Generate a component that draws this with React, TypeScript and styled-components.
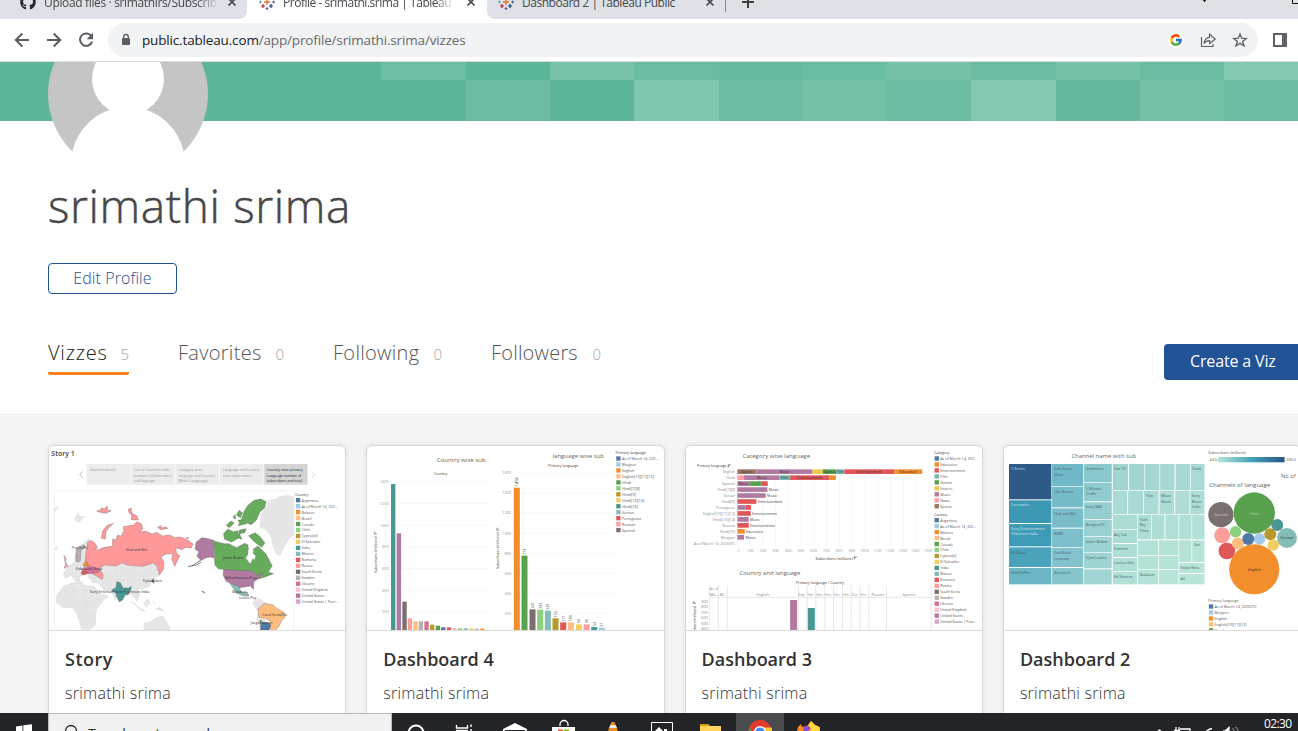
import React from "react";
import styled, { createGlobalStyle, css } from "styled-components";
import { FcGoogle } from "react-icons/fc";
import { FaGithub } from "react-icons/fa";

const GlobalStyle = createGlobalStyle`
  *, *::before, *::after { box-sizing: border-box; }
  body { margin: 0; background: #fff; }
`;

const Screen = styled.div`
  width: 1298px;
  height: 731px;
  overflow: hidden;
  display: flex;
  flex-direction: column;
  background: #fff;
  font-family: "Open Sans", "Noto Sans", sans-serif;
`;

/* ---------- browser chrome ---------- */

const TabStrip = styled.div`
  flex: none;
  display: flex;
  height: 19px;
  overflow: hidden;
  background: #fff;
`;

const Tab = styled.div<{ $width: number; $active?: boolean; $side?: "left" | "right" }>`
  flex: none;
  display: flex;
  align-items: flex-start;
  width: ${(p) => p.$width}px;
  height: 19px;
  background: ${(p) => (p.$active ? "#fff" : "#dee1e6")};
  ${(p) => p.$side === "left" && css`border-bottom-right-radius: 8px;`}
  ${(p) => p.$side === "right" && css`border-bottom-left-radius: 8px;`}
`;

const TabIcon = styled.span<{ $left: number; $gap: number }>`
  flex: none;
  display: block;
  width: 16px;
  height: 16px;
  margin: -6px ${(p) => p.$gap}px 0 ${(p) => p.$left}px;
  svg { display: block; }
`;

const TabTitle = styled.span<{ $width: number; $fade?: boolean; $spacing?: number }>`
  flex: none;
  width: ${(p) => p.$width}px;
  height: 17px;
  margin-top: -6px;
  overflow: hidden;
  white-space: nowrap;
  font-size: 12px;
  line-height: 17px;
  letter-spacing: ${(p) => p.$spacing ?? -0.47}px;
  color: #45494d;
  ${(p) => p.$fade && css`mask-image: linear-gradient(90deg, #000 88%, transparent);`}
`;

const TabClose = styled.svg<{ $left: number }>`
  flex: none;
  display: block;
  margin: -3px 0 0 ${(p) => p.$left}px;
`;

const StripEnd = styled.div`
  flex: 1;
  display: flex;
  align-items: flex-start;
  background: #dee1e6;
`;

const TabDivider = styled.span`
  width: 1px;
  height: 12px;
  background: #85888c;
`;

const PlusIcon = styled.svg`
  display: block;
  margin: -4px 0 0 16px;
`;

const WindowButtons = styled.svg`
  display: block;
  margin-left: auto;
`;

const Toolbar = styled.div`
  flex: none;
  display: flex;
  align-items: flex-start;
  height: 43px;
  padding-top: 4px;
  border-bottom: 1px solid #dadcdd;
  background: #fff;
`;

const NavButtons = styled.div`
  display: flex;
  gap: 16px;
  width: 108px;
  padding: 9px 0 0 14px;
  svg { display: block; flex: none; }
`;

const AddressBar = styled.div`
  display: flex;
  align-items: center;
  width: 1150px;
  height: 34px;
  padding: 0 10px 0 12px;
  border-radius: 17px;
  background: #f1f3f4;
`;

const Url = styled.span`
  margin: 0 0 0 10px;
  font-size: 13.5px;
  letter-spacing: -0.16px;
  line-height: 20px;
  color: #66696d;
  b { font-weight: 400; color: #202124; }
`;

const AddressActions = styled.div`
  display: flex;
  align-items: center;
  gap: 16px;
  margin-left: auto;
  svg { display: block; }
`;

const GoogleBadge = styled.span`
  display: grid;
  place-items: center;
  width: 16px;
  height: 16px;
  border-radius: 50%;
  background: #fff;
`;

const PanelIcon = styled.svg`
  display: block;
  margin: 9px 0 0 14px;
`;

/* ---------- profile ---------- */

const Banner = styled.div`
  flex: none;
  display: flex;
  height: 59px;
  padding-left: 48px;
  background: #5db69b;
`;

const Avatar = styled.svg`
  position: relative;
  z-index: 1;
  display: block;
  flex: none;
  overflow: hidden;
`;

const Tiles = styled.div`
  display: grid;
  flex: none;
  margin-left: 173.4px;
  grid-template-columns: repeat(11, 84.3px);
  grid-template-rows: 18px 41px;
`;

const Tile = styled.span<{ $tone: string }>`
  background: ${(p) => p.$tone};
`;

const Profile = styled.section`
  flex: none;
  display: flex;
  flex-direction: column;
  align-items: flex-start;
  height: 292px;
  padding: 54px 0 0 48px;
  font-weight: 300;
`;

const ProfileName = styled.h1`
  margin: -1px 0 0;
  height: 63px;
  font-size: 46px;
  font-weight: 300;
  line-height: 62px;
  letter-spacing: 0.62px;
  color: #484848;
  -webkit-text-stroke: 0.5px #484848;
`;

const EditButton = styled.button`
  width: 129px;
  height: 31px;
  margin: 26px 0 0;
  padding: 0 0 1px;
  border: 1px solid #1f5296;
  border-radius: 4px;
  background: #fff;
  font: 300 16px/28px "Open Sans", sans-serif;
  letter-spacing: 0.1px;
  color: #1f4f92;
`;

const NavRow = styled.div`
  display: flex;
  align-items: flex-start;
  width: 1250px;
  margin-top: 44px;
`;

const NavTab = styled.div<{ $width: number; $active?: boolean }>`
  flex: none;
  display: flex;
  justify-content: space-between;
  align-items: baseline;
  width: ${(p) => p.$width}px;
  height: 37px;
  margin-right: 49px;
  padding-top: 1px;
  border-bottom: 3px solid ${(p) => (p.$active ? "#f58220" : "transparent")};
  border-radius: 2px;
  font-size: 20px;
  line-height: 28px;
  color: ${(p) => (p.$active ? "#222" : "#555")};
`;

const Label = styled.span<{ $spacing: number }>`
  letter-spacing: ${(p) => p.$spacing}px;
`;

const Count = styled.span`
  font-size: 15px;
  color: #a3a3a3;
`;

const CreateButton = styled.button`
  flex: none;
  width: 160px;
  height: 36px;
  margin: 6px 0 0 auto;
  padding: 0 21px 2px 26px;
  margin-right: -26px;
  border: 0;
  border-radius: 4px;
  background: #225397;
  text-align: left;
  white-space: nowrap;
  font: 400 16px/34px "Open Sans", sans-serif;
  letter-spacing: -0.15px;
  color: #fff;
`;

/* ---------- viz cards ---------- */

const Gallery = styled.section`
  flex: none;
  display: grid;
  grid-template-columns: repeat(4, 298.3px);
  column-gap: 20px;
  height: 300px;
  padding: 32px 0 0 48px;
  background: #f4f4f4;
  overflow: hidden;
`;

const Card = styled.article`
  height: 290px;
  border: 1px solid #d9d9d9;
  border-radius: 6px;
  background: #fff;
  box-shadow: 0 0 5px rgba(0, 0, 0, 0.09);
  overflow: hidden;
`;

const Thumb = styled.svg`
  display: block;
  width: 100%;
  height: 184px;
  font-family: "Open Sans", sans-serif;
`;

const CardBody = styled.div`
  padding: 14px 16px;
  border-top: 1px solid #dcdcdc;
`;

const CardTitle = styled.h2<{ $spacing: number }>`
  margin: 0;
  font-size: 18px;
  font-weight: 600;
  line-height: 28px;
  letter-spacing: ${(p) => p.$spacing}px;
  color: #333;
`;

const CardAuthor = styled.p`
  margin: 8px 0 0;
  font-size: 16px;
  font-weight: 300;
  line-height: 24px;
  letter-spacing: 0.25px;
  color: #333;
`;

/* ---------- taskbar ---------- */

const Taskbar = styled.footer`
  flex: none;
  display: flex;
  height: 18px;
  overflow: hidden;
  background: #232428;
`;

const StartButton = styled.div`
  width: 48px;
`;

const SearchBox = styled.div`
  display: flex;
  align-items: flex-start;
  width: 344px;
  height: 40px;
  padding: 10px 0 0 15px;
  border: 1px solid #b9b9b9;
  background: #f1f1f1;
  font-size: 14px;
  line-height: 20px;
  letter-spacing: -0.1px;
  color: #333;
  span { margin: 0 0 0 10px; }
`;

const TaskIcons = styled.svg`
  display: block;
  flex: none;
`;

const Tray = styled.div`
  display: flex;
  margin-left: auto;
`;

const Clock = styled.span`
  width: 34px;
  padding-top: 2px;
  font-size: 12px;
  line-height: 17px;
  letter-spacing: -0.6px;
  white-space: nowrap;
  color: #fff;
`;

/* ---------- drawing helpers ---------- */

type TextProps = {
  x: number;
  y: number;
  w: number;
  size?: number;
  fill?: string;
  weight?: number;
  turn?: boolean;
  children: string;
};

const T = ({ x, y, w, size = 12, fill = "#555", weight = 400, turn, children }: TextProps) => (
  <text
    x={x}
    y={y}
    fontSize={size}
    fill={fill}
    fontWeight={weight}
    textLength={w}
    lengthAdjust="spacingAndGlyphs"
    transform={turn ? `rotate(-90 ${x} ${y})` : undefined}
  >
    {children}
  </text>
);

type Entry = [string, string, number];

const Legend = ({ x, y, items }: { x: number; y: number; items: Entry[] }) => (
  <g>
    {items.map(([color, label, w], i) => (
      <g key={label}>
        <rect x={x} y={y + i * 17.9} width="13" height="13" fill={color} />
        <T x={x + 17} y={y + 11 + i * 17.9} w={w}>{label}</T>
      </g>
    ))}
  </g>
);

const COUNTRIES: Entry[] = [
  ["#4e79a7", "Argentina", 50], ["#a0cbe8", "As of March 14, 202...", 108], ["#f28e2b", "Belarus", 38],
  ["#ffbe7d", "Brazil", 30], ["#59a14f", "Canada", 37], ["#8cd17d", "Chile", 25], ["#b6992d", "Cyprus[e]", 48],
  ["#f1ce63", "El Salvador", 57], ["#499894", "India", 25], ["#86bcb6", "Mexico", 36], ["#e15759", "Romania", 44],
  ["#ff9d9a", "Russia", 33], ["#79706e", "South Korea", 60], ["#bab0ac", "Sweden", 38], ["#d37295", "Ukraine", 38],
  ["#fabfd2", "United Kingdom", 79], ["#b07aa1", "United States", 68], ["#d4a6c8", "United States | Puer...", 110],
];

const LANGUAGES: Entry[] = [
  ["#4e79a7", "As of March 14, 202...", 110], ["#a0cbe8", "Bhojpuri", 43], ["#f28e2b", "English", 37],
  ["#ffbe7d", "English[10][11][12]", 96], ["#59a14f", "Hindi", 28], ["#8cd17d", "Hindi[7][8]", 54],
  ["#b6992d", "Hindi[9]", 42], ["#f1ce63", "Hindi[13][14]", 67], ["#499894", "Hindi[16]", 48],
  ["#86bcb6", "Korean", 36], ["#e15759", "Portuguese", 58], ["#ff9d9a", "Russian", 40], ["#79706e", "Spanish", 40],
];

const SortMark = ({ x, y, turn }: { x: number; y: number; turn?: boolean }) => (
  <path
    d={turn ? `M${x} ${y}v-9M${x + 3} ${y}v-7M${x + 6} ${y}v-4` : `M${x} ${y}h9M${x} ${y + 3}h6M${x} ${y + 6}h3M${x} ${y}v9`}
    stroke="#555"
    strokeWidth="1.5"
    fill="none"
  />
);

/* ---------- thumbnails ---------- */

const StoryThumb = () => (
  <Thumb viewBox="9 18 888 552" preserveAspectRatio="none">
    <T x={16} y={48} w={70} size={20} fill="#444" weight={600}>Story 1</T>
    <path d="M111 94l-10 10 10 10" fill="none" stroke="#999" strokeWidth="2" />
    <path d="M795 94l10 10-10 10" fill="none" stroke="#ccc" strokeWidth="2" />
    {[122, 255, 388, 521].map((x) => <rect key={x} x={x} y="72" width="131" height="62" fill="#ececec" />)}
    <rect x="654" y="72" width="130" height="62" fill="#d4d4d4" />
    {([
      [131, 94, 78, "Channel details"], [263, 94, 106, "List of channels with"], [263, 110, 114, "number of Subscribers"],
      [263, 126, 63, "and language"], [397, 94, 71, "Category wise"], [397, 110, 109, "language and Country"],
      [397, 126, 87, "Wish Language"], [530, 94, 110, "Language and Country"], [530, 110, 87, "wise subscribers'"],
    ] as [number, number, number, string][]).map(([x, y, w, s]) => <T key={s} x={x} y={y} w={w} fill="#999">{s}</T>)}
    <T x={662} y={94} w={108} fill="#222">Country wise primary</T>
    <T x={662} y={110} w={103} fill="#222">Language number of</T>
    <T x={662} y={126} w={106} fill="#222">subscribers and total</T>
    <path d="M24 570V152H743V570" fill="none" stroke="#eee" strokeWidth="2" />
    <g fill="#e6e6e6" stroke="#d8d8d8" strokeWidth="1.5" strokeLinejoin="round">
      <path d="M642 222l18-20 8-22 24-4 8-8 24-2 19 4V285l-16 14-14 24-10 25-12-4-12-25-6-29-14-20-18-6z" stroke="none" />
      <path d="M24 205l15-8-8 14-7 7zM84 238l10-20 10 10 14 0-10 12-10 8zM26 325l8-6 2 8-9 4z" stroke="none" />
      <path d="M30 470l22-31 26-10 30-2 8 10 28 2 22 24 22 6-18 14-18 24-4 24 0 24-17 13h-24l-6-20-8-26-12-18-30-2-20-14z" />
      <path d="M52 402l16-24 20-12-2-22 12-20 28-28 9 4-5 20-6 22-10 22 14 20-16 22-14 4 6 18-16-4-12-18-18 10z" />
      <path d="M145 386l20-8 32 0 18-8 40 10 26 0 22-10 28 8 10 28-20 10-12 24-24 7-12-2 8 20-8 19-18-22-18 4-8-14-22 26-12-28-20 4-18-26-18 0-16-24z" />
      <path d="M252 484l14 6 12 12M265 492l20 20 14 2M292 488l12-10 8 10-12 14zM320 480l6 14M330 506l12-4 12 12-20-5z" />
      <path d="M294 570l0-20 19-4 20-14 18-4 10 18 10 18v6z" />
      <path d="M620 486l18-10 24 14 16 8-38 22-14-18zM634 520l18 8 4 20-12 22-10-24z" />
      <path d="M46 470l52 24M76 430l10 60M112 440l10 70M52 440l45 10M96 494l40-10M120 500l24 24M110 530l34-5M170 400l60 20M248 388l50 24M208 383l8 42" fill="none" />
    </g>
    <g stroke="#6a6262" strokeWidth="1.1" strokeLinejoin="round">
      <path fill="#f99" d="M117 366l3-28 5-32 12-4 10 8 8 14-12 2 12 4 20-8 24-3 1-22 10 3 4-14 12 2 7-16-1-12 16-3 12-1 14-11 13 8 3 14-10 8 20-1 18 8 13-5 18 11 22-3 15 8 18-2 20 9 17 12-6 12-16-2-12 7-18-6 2 17 10 7-6 12-9 20-9-21 3-17-19 1-17 8 9 15-1 23-12 17-8-28-12-7-31 9-44-3-18-7-16 9-36-3-17 11 13 17-2 15-33-18-10-12z" />
      <path fill="#f99" d="M166 295l4-23 12-15 20-7-14 13-9 14-1 20zM246 209l9-5 2 15 16 10 4 11-21-1 1-13-8-8zM152 213l12-4 2-6 9 4 8-9 3 14 10 0-16 8-18-3zM334 262l10-5 2 7 12-4 8 5-22 4zM420 292l8 2-6 2z" />
      <path fill="#b7aeac" d="M89 363l2-35 22-14 6 6-15 12-1 30-7 4z" />
      <path fill="#d37295" d="M107 387l27-8 30 10-9 9-29 3-13-1z" />
      <path fill="#e15759" d="M108 394l12-2 5 8-11 5-9-4z" />
      <path fill="#f28e2b" d="M111 374l10-11 8 14-15 2z" />
      <path fill="#f5b3c5" d="M54 346l7 9-3 10 10 14-14 6 4-12z" />
      <path fill="#499894" d="M200 448l10-5 2-18 11 3 8 16 17 0 8-5-2 12-9 14-7-2-8 16-10 7-9-17-3-13-11-2z" />
      <path fill="#555" d="M315 423l8-7 0 14zM466 454l10 6-3-5z" />
      <path fill="#b07aa1" d="M450 306l17-13 12 2 24 6 0 53-11-3-12 2-17 9-26 16 26-18-11-11 6-14-11-7z" />
      <path fill="#67ab5d" d="M503 303l31 8 14 0 23 12 24-13 10 4 3 24-10 16 14 19 11-23-7-19 19-13 24 23 9 17 10 20-12 18 16 5-28 11-18 5-13-11-84-17-23-3-10-12-3-71z" />
      <path fill="#67ab5d" d="M594 213l12-18 18-14 20-4 16 8-5 19-14 12-10 24-16 14-14-6-15-10zM532 281l13-14 16 8 15-3-2 24-18 10-21-8zM580 270l20-4-4 12-16 3 7 17-13-5zM607 287l20-9 15 12 14 19-10 13-21-16zM540 256l15-13 9 6-14 14zM575 241l12-2 15 12-26 6 4-9zM570 225l9-14 10 7-6 15zM560 232l6-8 3 14z" />
      <path fill="#fff" stroke="none" d="M606 330l8-6 8 6-2 10 8 8-4 12-8-10-10-4z" />
      <path fill="#b07aa1" d="M532 389l86 4 14 13 18-8-16 20-12 8 0 22-10-10-31 5-18-8-24-12-8-17z" />
      <path fill="#86bcb6" d="M551 430l26 9 9 19 18-1 4 11-16-1-21-7-9-15z" />
      <path fill="#ffbe7d" d="M636 507l16-16 28 3 9 9 24 14 4 13-12 13-7 17-16 17-14-17 4-18-18-8-16-3z" />
      <path fill="#4e79a7" d="M642 570l6-24 18 2 8 6-5 16z" />
      <path fill="#59a14f" d="M642 540l4 2-2 20z" />
    </g>
    <path d="M425 380l26-5 14-8" fill="none" stroke="#444" strokeWidth="2" />
    {([
      [240, 333, 63, "Vlad and Niki"], [530, 357, 63, "Justin Bieber"], [537, 418, 96, "BillionSurpriseToys"],
      [77, 326, 49, "PewDiePie"], [89, 391, 79, "Kids Diana Show"], [131, 458, 179, "Sony Entertainment Television India"],
      [291, 427, 57, "HybeLabels"], [558, 458, 42, "Badabun"], [578, 477, 53, "Luisito Play"],
      [648, 529, 75, "Canal KondZilla"], [613, 553, 66, "JuegaGerman"],
    ] as [number, number, number, string][]).map(([x, y, w, s]) => <T key={s} x={x} y={y} w={w} size={11} fill="#333">{s}</T>)}
    <T x={747} y={167} w={39} fill="#333">Country</T>
    <Legend x={749} y={174} items={COUNTRIES} />
  </Thumb>
);

const COUNTRY_BARS: [number, number, string][] = [
  [81, 132, "#499894"], [98, 280, "#b07aa1"], [115, 485, "#79706e"], [131, 535, "#ff9d9a"], [148, 544, "#ffbe7d"],
  [164, 544, "#bab0ac"], [181, 544, "#d37295"], [198, 554, "#b6992d"], [215, 557, "#59a14f"], [231, 562, "#4e79a7"],
  [248, 562, "#e15759"], [265, 564, "#fabfd2"], [281, 565, "#8cd17d"], [298, 565, "#86bcb6"], [315, 565, "#f1ce63"],
  [331, 566, "#d4a6c8"], [348, 566, "#f28e2b"],
];

const LANGUAGE_BARS: [number, number, string, string][] = [
  [449, 143, "#f28e2b", "1,458"], [472, 347, "#59a14f", "773"], [496, 508, "#79706e", "241"], [519, 509, "#8cd17d", "239"],
  [542, 512, "#86bcb6", "229"], [565, 535, "#b6992d", "152"], [588, 547, "#e15759", "111"], [611, 547, "#ffbe7d", "109"],
  [635, 553, "#f1ce63", "93"], [658, 553, "#ff9d9a", "90"], [681, 561, "#499894", "63"], [704, 563, "#a0cbe8", "57"],
];

const DashboardFourThumb = () => (
  <Thumb viewBox="9 18 888 552" preserveAspectRatio="none">
    <T x={218} y={66} w={147} size={18} fill="#666">Country wise sub</T>
    <T x={565} y={54} w={154} size={18} fill="#666">language wise sub</T>
    <T x={210} y={106} w={40} fill="#333">Country</T>
    <T x={552} y={80} w={90} fill="#333">Primary language</T>
    {[1400, 1200, 1000, 800, 600, 400, 200].map((n, i) => (
      <g key={n}>
        <path d={`M78 ${126 + i * 65}H380`} stroke="#f4f4f4" strokeWidth="2" />
        <T x={n > 999 ? 47 : 54} y={130 + i * 65} w={n > 999 ? 27 : 20} size={11} fill="#999">{String(n)}</T>
      </g>
    ))}
    {[1600, 1400, 1200, 1000, 800, 600, 400, 200].map((n, i) => (
      <g key={n}>
        <path d={`M445 ${99 + i * 60.2}H747`} stroke="#f4f4f4" strokeWidth="2" />
        <T x={n > 999 ? 414 : 421} y={103 + i * 60.2} w={n > 999 ? 27 : 20} size={11} fill="#999">{String(n)}</T>
      </g>
    ))}
    {COUNTRY_BARS.map(([x, y, c]) => <rect key={x} x={x} y={y} width="13" height={570 - y} fill={c} />)}
    {LANGUAGE_BARS.map(([x, y, c, v]) => (
      <g key={x}>
        <rect x={x} y={y} width="18" height={570 - y} fill={c} />
        <T x={x + 13} y={y - 3} w={v.length > 4 ? 28 : v.length > 2 ? 18 : 12} size={11} fill="#444" turn>{v}</T>
      </g>
    ))}
    <T x={38} y={399} w={110} size={12} fill="#333" turn>Subscribers (millions)</T>
    <T x={405} y={387} w={110} size={12} fill="#333" turn>Subscribers (millions)</T>
    <SortMark x={31} y={284} turn />
    <SortMark x={398} y={272} turn />
    <T x={754} y={41} w={91} fill="#333">Primary language</T>
    <Legend x={756} y={49} items={LANGUAGES} />
  </Thumb>
);

type Segment = [number, number, string, string?, number?, number?];

const CATEGORY_ROWS: { name: string; x: number; segs: Segment[]; tail?: string; tailW?: number }[] = [
  { name: "English", x: 122, segs: [[166, 57, "#9c755f", "Sports", 178, 33], [223, 168, "#b07aa1", "Music", 292, 30], [391, 31, "#edc948"], [422, 40, "#59a14f", "Games", 424, 37], [462, 25, "#76b7b2", "Film", 465, 20], [487, 149, "#e15759", "Entertainment", 523, 76], [636, 84, "#f28e2b", "Education", 651, 53]] },
  { name: "Hindi", x: 133, segs: [[166, 20, "#ff9da7"], [186, 106, "#b07aa1", "Music", 224, 30], [292, 32, "#76b7b2", "Film", 297, 22], [324, 118, "#e15759", "Entertainment", 345, 76], [442, 19, "#f28e2b"]] },
  { name: "Spanish", x: 120, segs: [[166, 38, "#b07aa1", "Music", 169, 30], [204, 35, "#59a14f"], [239, 18, "#e15759"]] },
  { name: "Hindi[7][8]", x: 106, segs: [[166, 90, "#b07aa1"]], tail: "Music", tailW: 30 },
  { name: "Korean", x: 125, segs: [[166, 85, "#b07aa1"]], tail: "Music", tailW: 30 },
  { name: "Hindi[9]", x: 119, segs: [[166, 57, "#e15759"]], tail: "Entertainment", tailW: 74 },
  { name: "Portuguese", x: 103, segs: [[166, 25, "#b07aa1"], [191, 16, "#e15759"]] },
  { name: "English[10][11][12]", x: 63, segs: [[166, 40, "#e15759"]], tail: "Entertainment", tailW: 74 },
  { name: "Hindi[13][14]", x: 92, segs: [[166, 34, "#b07aa1"]], tail: "Music", tailW: 30 },
  { name: "Russian", x: 121, segs: [[166, 34, "#e15759"]], tail: "Entertainment", tailW: 74 },
  { name: "Hindi[16]", x: 114, segs: [[166, 22, "#f28e2b"]], tail: "Education", tailW: 51 },
  { name: "Bhojpuri", x: 117, segs: [[166, 20, "#b07aa1"]], tail: "Music", tailW: 30 },
  { name: "As of March 14, 2023UTC", x: 36, segs: [] },
];

const DashboardThreeThumb = () => (
  <Thumb viewBox="12 18 888 552" preserveAspectRatio="none">
    <T x={182} y={54} w={202} size={18} fill="#666">Category wise language</T>
    <T x={45} y={82} w={88} fill="#333">Primary language</T>
    <SortMark x={138} y={74} />
    {Array.from({ length: 16 }, (_, i) => (
      <path key={i} d={`M${166 + i * 38.3} 86V320`} stroke="#f3f3f3" strokeWidth="2" />
    ))}
    {CATEGORY_ROWS.map((row, i) => {
      const y = 88 + i * 17.9;
      const last = row.segs[row.segs.length - 1];
      return (
        <g key={row.name}>
          <T x={row.x} y={y + 11} w={159 - row.x} size={11} fill="#888">{row.name}</T>
          {row.segs.map(([x, w, c]) => <rect key={x} x={x} y={y} width={w} height="14" fill={c} />)}
          {row.segs.map(([x, , , s, tx, tw]) => s && <T key={x} x={tx!} y={y + 11} w={tw!} size={11} fill="#333">{s}</T>)}
          {row.tail && <T x={last[0] + last[1] + 4} y={y + 11} w={row.tailW!} fill="#444">{row.tail}</T>}
        </g>
      );
    })}
    {Array.from({ length: 16 }, (_, i) => {
      const w = i === 0 ? 6 : i < 10 ? 20 : 26;
      return <T key={i} x={166 + i * 38.1 - w / 2 + (i ? 0 : 3)} y={336} w={w} size={11} fill="#999">{String(i * 100)}</T>;
    })}
    <T x={400} y={359} w={111} fill="#333">Subscribers (millions)</T>
    <SortMark x={516} y={350} />
    <T x={172} y={405} w={183} size={18} fill="#666">Country and language</T>
    <T x={342} y={431} w={144} fill="#333">Primary language / Country</T>
    <path d="M82 472H747M82 436V570M109 436V570M136 436V570M747 436V570" stroke="#ddd" strokeWidth="2" />
    {[349, 375, 401, 428, 454, 481, 507, 534, 560, 613].map((x) => <path key={x} d={`M${x} 436V570`} stroke="#ddd" strokeWidth="2" />)}
    {([
      [83, 451, 25, "As of"], [83, 468, 24, "Ma.."], [113, 468, 19, "Bh.."], [223, 468, 38, "English"], [349, 468, 22, "Eng.."],
      [376, 468, 22, "Hin.."], [402, 468, 22, "Hin.."], [428, 468, 22, "Hin.."], [455, 468, 22, "Hin.."], [482, 468, 22, "Hin.."],
      [509, 468, 22, "Kor.."], [535, 468, 22, "Por.."], [567, 468, 40, "Russian"], [660, 468, 40, "Spanish"],
    ] as [number, number, number, string][]).map(([x, y, w, s]) => <T key={x + "-" + y} x={x} y={y} w={w} size={11} fill="#888">{s}</T>)}
    {[900, 800, 700, 600, 500, 400].map((n, i) => (
      <g key={n}>
        <T x={57} y={488 + i * 16.4} w={20} size={11} fill="#888">{String(n)}</T>
        <path d={`M82 ${484 + i * 16.4}H747`} stroke="#f4f4f4" strokeWidth="1" />
      </g>
    ))}
    <rect x="324" y="480" width="21" height="90" fill="#b07aa1" />
    <rect x="377" y="504" width="21" height="66" fill="#499894" />
    <T x={41} y={602} w={104} fill="#333" turn>Subscribers (millions)</T>
    <SortMark x={34} y={492} turn />
    <T x={755} y={41} w={46} fill="#333">Category</T>
    <Legend
      x={757}
      y={49}
      items={[
        ["#4e79a7", "As of March 14, 202...", 110], ["#f28e2b", "Education", 51], ["#e15759", "Entertainment", 74],
        ["#76b7b2", "Film", 22], ["#59a14f", "Games", 35], ["#edc948", "How-to", 36], ["#b07aa1", "Music", 30],
        ["#ff9da7", "News", 28], ["#9c755f", "Sports", 34],
      ]}
    />
    <T x={755} y={227} w={40} fill="#333">Country</T>
    <Legend x={757} y={234} items={COUNTRIES} />
  </Thumb>
);

const TREE: [number, number, number, number, string][] = [
  [27, 72, 127, 106, "#2d5a87"], [27, 181, 127, 68, "#3d98b4"], [27, 252, 127, 67, "#3f9cb7"], [27, 322, 127, 59, "#4aa3bb"],
  [27, 384, 127, 49, "#6cb5c5"], [156, 72, 93, 66, "#70b8c7"], [156, 140, 93, 62, "#76bbc8"], [156, 205, 93, 58, "#7abdc9"],
  [156, 266, 93, 55, "#7dbfca"], [156, 323, 93, 58, "#82c2cc"], [156, 384, 93, 49, "#87c5cd"], [251, 72, 84, 55, "#8bc8ce"],
  [251, 129, 84, 55, "#90cbd0"], [251, 187, 84, 50, "#95ced1"], [251, 239, 84, 49, "#98d0d2"], [251, 290, 84, 47, "#9bd2d2"],
  [251, 339, 84, 46, "#9dd4d2"], [251, 388, 84, 45, "#a0d5d3"], [338, 72, 46, 79, "#a0d5d2"], [387, 72, 46, 79, "#a2d6d3"],
  [435, 72, 43, 79, "#a4d7d4"], [480, 72, 43, 79, "#a6d8d4"], [526, 72, 44, 79, "#a8d9d5"], [572, 72, 41, 79, "#a9dad5"],
  [338, 153, 43, 70, "#a9dad4"], [384, 153, 45, 70, "#aadad5"], [431, 153, 44, 70, "#acdbd5"], [478, 153, 44, 70, "#addcd6"],
  [525, 153, 43, 70, "#aeddd6"], [570, 153, 43, 70, "#afddd6"], [338, 225, 73, 42, "#abdcd4"], [338, 269, 73, 40, "#acddd5"],
  [338, 312, 73, 39, "#aedfd6"], [338, 354, 73, 39, "#b0dfd6"], [338, 395, 73, 38, "#b1e0d6"], [413, 225, 40, 73, "#aeddd6"],
  [455, 225, 38, 73, "#afded6"], [496, 225, 39, 73, "#b1dfd7"], [537, 225, 37, 73, "#b1e0d7"], [576, 225, 37, 73, "#b2e0d7"],
  [413, 301, 61, 44, "#b2e1d7"], [476, 301, 59, 44, "#b4e2d8"], [413, 347, 61, 40, "#b4e2d7"], [476, 347, 59, 40, "#b6e3d8"],
  [413, 389, 61, 44, "#b5e2d8"], [476, 389, 59, 44, "#b8e4d9"], [537, 301, 37, 65, "#b5e2d8"], [576, 301, 37, 65, "#b7e3d8"],
  [537, 369, 76, 30, "#b8e4d9"], [537, 402, 76, 31, "#b9e5da"],
];

const TREE_LABELS: [number, number, number, string, string?][] = [
  [33, 91, 41, "T-Series", "#d3dfe9"], [33, 199, 55, "Cocomelon", "#d3e8ee"], [33, 270, 101, "Sony Entertainment", "#d3e8ee"],
  [33, 286, 80, "Television India", "#d3e8ee"], [33, 341, 43, "MrBeast"], [33, 402, 54, "PewDiePie"], [162, 91, 53, "Kids Diana"],
  [162, 107, 27, "Show"], [162, 159, 58, "Like Nastya"], [162, 224, 65, "Vlad and Niki"], [162, 284, 28, "WWE"],
  [162, 342, 52, "Zee Music"], [162, 359, 45, "Company"], [162, 401, 49, "Blackpink"], [257, 91, 53, "Goldmines"],
  [257, 149, 46, "5-Minute"], [257, 165, 31, "Crafts"], [257, 204, 48, "Sony SAB"], [257, 258, 56, "BangtanTV"],
  [257, 309, 66, "Justin Bieber"], [257, 358, 61, "Hybe Labels"], [342, 91, 34, "Zee TV"], [576, 91, 27, "Dude"],
  [437, 171, 22, "Tips"], [483, 171, 29, "Wave"], [483, 188, 31, "Music"], [575, 171, 25, "Sony"], [575, 188, 30, "Music"],
  [575, 203, 26, "India"], [419, 243, 24, "Yash"], [419, 259, 17, "Raj"], [419, 276, 27, "Films"], [342, 287, 38, "Aaj Tak"],
  [342, 330, 42, "Eminem"], [342, 371, 60, "LooLoo Kids"], [342, 413, 56, "Ed Sheeran"], [419, 409, 44, "Badabun"],
  [581, 319, 18, "Get"], [541, 386, 57, "Felipe Neto"], [541, 419, 13, "A4"],
];

const BUBBLES: [number, number, number, string][] = [
  [762, 219, 62, "#59a14f"], [762, 388, 75, "#f28e2b"], [662, 224, 38, "#79706e"], [860, 294, 30, "#86bcb6"],
  [666, 286, 24, "#ff9d9a"], [680, 333, 25, "#e15759"], [706, 275, 17, "#8cd17d"], [713, 310, 18, "#ffbe7d"],
  [744, 297, 18, "#4e79a7"], [778, 297, 17, "#a0cbe8"], [810, 283, 18, "#b6992d"], [819, 315, 17, "#f1ce63"],
  [831, 255, 18, "#499894"],
];

const DashboardTwoThumb = () => (
  <Thumb viewBox="12 18 888 552" preserveAspectRatio="none">
    <defs>
      <linearGradient id="subscribers">
        <stop offset="0" stopColor="#b9e6da" />
        <stop offset=".5" stopColor="#45a1bb" />
        <stop offset="1" stopColor="#2a5783" />
      </linearGradient>
    </defs>
    <T x={214} y={54} w={194} size={18} fill="#666">Channel name with sub</T>
    {TREE.map(([x, y, w, h, c]) => <rect key={`${x}-${y}`} x={x} y={y} width={w} height={h} fill={c} />)}
    {TREE_LABELS.map(([x, y, w, s, c]) => <T key={`${x}-${y}`} x={x} y={y} w={w} fill={c ?? "#42666c"}>{s}</T>)}
    <T x={624} y={42} w={113} fill="#555">Subscribers (millions)</T>
    <T x={628} y={62} w={23} size={11}>44.6</T>
    <rect x="653" y="51" width="200" height="16" fill="url(#subscribers)" />
    <T x={857} y={62} w={29} size={11}>238.0</T>
    <T x={842} y={114} w={44} size={18} fill="#666">No of</T>
    <T x={627} y={140} w={183} size={18} fill="#666">Channels of  language</T>
    {BUBBLES.map(([x, y, r, c]) => <circle key={`${x}-${y}`} cx={x} cy={y} r={r} fill={c} />)}
    <T x={642} y={229} w={41} fill="#c9c5c4">Spanish</T>
    <T x={749} y={224} w={26} fill="#b7d6b3">Hindi</T>
    <T x={841} y={298} w={38} fill="#333">Korean</T>
    <T x={743} y={393} w={39} fill="#333">English</T>
    <T x={624} y={486} w={90}>Primary language</T>
    <Legend
      x={626}
      y={493}
      items={[
        ["#4e79a7", "As of March 14, 2023UTC", 127], ["#a0cbe8", "Bhojpuri", 43], ["#f28e2b", "English", 37],
        ["#ffbe7d", "English[10][11][12]", 96], ["#59a14f", "Hindi", 28],
      ]}
    />
  </Thumb>
);

/* ---------- icons ---------- */

const TableauMark = () => (
  <svg width="16" height="16" viewBox="0 0 16 16" fill="none" strokeWidth="1">
    <path d="M8 5v6M5 8h6" stroke="#e8762d" strokeWidth="1.3" />
    <path d="M4 10v4M2 12h4" stroke="#c72035" strokeWidth="1.2" />
    <path d="M12 10v4M10 12h4" stroke="#1f447e" strokeWidth="1.2" />
    <path d="M8 13.2v2.8M6.6 14.6h2.8M14.6 6.6v2.8M13.2 8H16" stroke="#3d5d97" />
    <path d="M4 2v4M2 4h4M12 2v4M10 4h4M1.4 6.6v2.8M0 8h2.8" stroke="#5c9eaa" />
    <path d="M8 0v2.4M6.8 1.2h2.4" stroke="#7099a5" />
  </svg>
);

const Close = ({ left }: { left: number }) => (
  <TabClose $left={left} width="10" height="10" viewBox="0 0 10 10">
    <path d="M1.5 1.5l7 7M8.5 1.5l-7 7" stroke="#45494d" strokeWidth="1.7" />
  </TabClose>
);

const TILE_TONES = [
  "#6ebda5", "#5cb79a", "#77c2a9", "#6cbca3", "#66ba9f", "#6bbda3", "#76c2a9", "#6cbca3", "#76c2a9", "#6cbca3", "#84c8b1",
  "#5db69b", "#6cbca3", "#5db69b", "#7fc6af", "#6cbca3", "#75c1a8", "#6cbca3", "#85c8b2", "#66b99f", "#75c1a8", "#6cbca3",
];

const CARDS = [
  { title: "Story", spacing: 0.5, Art: StoryThumb },
  { title: "Dashboard 4", spacing: 0, Art: DashboardFourThumb },
  { title: "Dashboard 3", spacing: 0, Art: DashboardThreeThumb },
  { title: "Dashboard 2", spacing: 0, Art: DashboardTwoThumb },
];

export default function App() {
  return (
    <Screen>
      <GlobalStyle />
      <TabStrip>
        <Tab $width={247} $side="left">
          <TabIcon $left={20} $gap={8}><FaGithub size={16} color="#24292f" /></TabIcon>
          <TabTitle $width={174} $fade $spacing={-0.35}>Upload files · srimathirs/Subscrib</TabTitle>
          <Close left={9} />
        </Tab>
        <Tab $width={240} $active>
          <TabIcon $left={12} $gap={8}><TableauMark /></TabIcon>
          <TabTitle $width={172} $fade>Profile - srimathi.srima | Tableau</TabTitle>
          <Close left={11} />
        </Tab>
        <Tab $width={238} $side="right">
          <TabIcon $left={11} $gap={8}><TableauMark /></TabIcon>
          <TabTitle $width={172}>Dashboard 2 | Tableau Public</TabTitle>
          <Close left={11} />
        </Tab>
        <StripEnd>
          <TabDivider />
          <PlusIcon width="12" height="12" viewBox="0 0 12 12">
            <path d="M6 0v12M0 6h12" stroke="#3c4043" strokeWidth="2" />
          </PlusIcon>
          <WindowButtons width="100" height="6" viewBox="0 0 100 6">
            <path d="M4 -2l2.5 3L9 -2" fill="none" stroke="#222" strokeWidth="1.6" />
            <path d="M94.5 0v3.5H100" fill="none" stroke="#111" />
          </WindowButtons>
        </StripEnd>
      </TabStrip>

      <Toolbar>
        <NavButtons>
          <svg width="16" height="16" viewBox="0 0 16 16" fill="none" stroke="#5a5e62" strokeWidth="2">
            <path d="M15 8H2.5M8.3 1.5L1.8 8l6.5 6.5" />
          </svg>
          <svg width="16" height="16" viewBox="0 0 16 16" fill="none" stroke="#5a5e62" strokeWidth="2">
            <path d="M1 8h12.5M7.7 1.5L14.2 8l-6.5 6.5" />
          </svg>
          <svg width="16" height="16" viewBox="0 0 16 16" fill="none" stroke="#5a5e62" strokeWidth="2">
            <path d="M13.6 4.5A6.2 6.2 0 1 0 14.1 9.6" />
            <path d="M15 .8v6.4H8.6z" fill="#5a5e62" stroke="none" />
          </svg>
        </NavButtons>
        <AddressBar>
          <svg width="12" height="14" viewBox="0 0 12 14">
            <rect x="2" y="5" width="8" height="7" rx="1" fill="#5a5e62" />
            <path d="M3.7 6V3.8a2.3 2.3 0 0 1 4.6 0V6" fill="none" stroke="#5a5e62" strokeWidth="1.3" />
          </svg>
          <Url><b>public.tableau.com</b>/app/profile/srimathi.srima/vizzes</Url>
          <AddressActions>
            <GoogleBadge><FcGoogle size={14} /></GoogleBadge>
            <svg width="16" height="16" viewBox="0 0 16 16" fill="none" stroke="#5f6368" strokeWidth="1.2">
              <path d="M1.5 5v9.5H13V12" />
              <path d="M4 11.5c.5-4 2.4-5.8 5.6-6.1V2.3L15.2 7 9.6 11.5V8.7C7 8.7 5.3 9.6 4 11.5z" />
            </svg>
            <svg width="16" height="16" viewBox="0 0 16 16" fill="none" stroke="#5f6368" strokeWidth="1.4">
              <path d="M8 2l1.7 4.2 4.5.3-3.5 2.9 1.2 4.4L8 11.4l-3.9 2.4 1.2-4.4L1.8 6.5l4.5-.3z" />
            </svg>
          </AddressActions>
        </AddressBar>
        <PanelIcon width="16" height="16" viewBox="0 0 16 16">
          <path d="M1 1h14v14H1zM3 3v10h7V3z" fill="#5f6368" fillRule="evenodd" />
        </PanelIcon>
      </Toolbar>

      <Banner>
        <Avatar width="160" height="112" viewBox="48 62 160 112">
          <clipPath id="portrait"><circle cx="128" cy="94" r="80" /></clipPath>
          <g clipPath="url(#portrait)">
            <rect x="48" y="0" width="160" height="152" fill="#c5c5c5" />
            <circle cx="128" cy="79" r="36" fill="#fff" />
            <circle cx="128" cy="164" r="57" fill="#fff" />
            <rect x="112" y="100" width="32" height="16" fill="#fff" />
          </g>
        </Avatar>
        <Tiles>{TILE_TONES.map((tone, i) => <Tile key={i} $tone={tone} />)}</Tiles>
      </Banner>

      <Profile>
        <ProfileName>srimathi srima</ProfileName>
        <EditButton>Edit Profile</EditButton>
        <NavRow>
          <NavTab $width={81} $active><Label $spacing={0.8}>Vizzes</Label><Count>5</Count></NavTab>
          <NavTab $width={106}><Label $spacing={0.3}>Favorites</Label><Count>0</Count></NavTab>
          <NavTab $width={109}><Label $spacing={0.3}>Following</Label><Count>0</Count></NavTab>
          <NavTab $width={110}><Label $spacing={0.2}>Followers</Label><Count>0</Count></NavTab>
          <CreateButton>Create a Viz</CreateButton>
        </NavRow>
      </Profile>

      <Gallery>
        {CARDS.map(({ title, spacing, Art }) => (
          <Card key={title}>
            <Art />
            <CardBody>
              <CardTitle $spacing={spacing}>{title}</CardTitle>
              <CardAuthor>srimathi srima</CardAuthor>
            </CardBody>
          </Card>
        ))}
      </Gallery>

      <Taskbar>
        <StartButton>
          <svg width="48" height="18" viewBox="0 0 48 18">
            <path d="M16 13.5l6.5-1V18H16zM23.3 12.3L32 11.2V18h-8.7z" fill="#fff" />
          </svg>
        </StartButton>
        <SearchBox>
          <svg width="14" height="16" viewBox="0 0 14 16" fill="none" stroke="#222" strokeWidth="1.3">
            <circle cx="7" cy="7" r="5.5" />
          </svg>
          <span>Type here to search</span>
        </SearchBox>
        <TaskIcons width="440" height="18" viewBox="392 713 440 18">
          <rect x="736" y="713" width="48" height="18" fill="#4a4b4f" />
          <circle cx="416" cy="733" r="7.5" fill="none" stroke="#fff" strokeWidth="2" />
          <path d="M456.5 725v3h11v-3M456 730.5h12M471 724.5v2.5M471 729v2" stroke="#fff" strokeWidth="1.4" fill="none" />
          <path d="M503 729l12-6 12 6v2h-24z" fill="#fff" />
          <path d="M505 730.5h20" stroke="#232428" />
          <path d="M560 726v-1.5a4 4 0 0 1 8 0v1.5" fill="none" stroke="#fff" strokeWidth="1.3" />
          <path d="M552 727h23v4h-23z" fill="#fff" />
          <path d="M558 729.5h5v2h-5z" fill="#f25022" /><path d="M564 729.5h5v2h-5z" fill="#7fba00" />
          <path d="M611.5 722h3l3.5 9h-10z" fill="#ef8a1d" /><path d="M610.5 725h5l1.5 3h-8z" fill="#eee" />
          <path d="M651.5 731v-8.5h21V731" fill="none" stroke="#fff" />
          <path d="M655 731l4-4 4 4zM664 731v-2h3v2z" fill="#fff" />
          <path d="M700 724h8l2 2h11v5h-21z" fill="#ffd35a" /><path d="M700 724h8l1 2h-9z" fill="#d99b12" />
          <path d="M748.5 731a11.500 11.500 0 0 1 22.500-3H760l-4 3z" fill="#e33b2e" />
          <path d="M748.5 731c.2-1 .6-2 1-3l3 3z" fill="#31a350" />
          <path d="M760 727.5h11.5q.5 1.500.5 3.500h-12z" fill="#fcc934" />
          <circle cx="760" cy="732" r="6" fill="#fff" /><circle cx="760" cy="732" r="4.6" fill="#4285f4" />
          <path d="M797 731l1-4 3-3 1 3 5-1 4-5 4 4 5 2v4z" fill="#ff8a1c" />
          <path d="M807 728l4-7 4 4 4 2 1 4h-9z" fill="#ffd83b" /><path d="M804 727l5-1 2 3-4 2h-4z" fill="#9048d8" />
        </TaskIcons>
        <Tray>
          <svg width="113" height="18" viewBox="1151 713 113 18" fill="none" stroke="#fff" strokeWidth="1.3">
            <path d="M1157 732l2.500-2 2.500 2M1176 727v3M1179 727v3M1174 730.500h6M1180 729h10v2M1206 731.500q3-2.500 6-3" />
            <path d="M1223 731h2l4-3.500v4z" fill="#fff" />
            <path d="M1232 728q2 1 2 3M1235 727q3 1 3 4" stroke="#777" />
          </svg>
          <Clock>02:30</Clock>
        </Tray>
      </Taskbar>
    </Screen>
  );
}
